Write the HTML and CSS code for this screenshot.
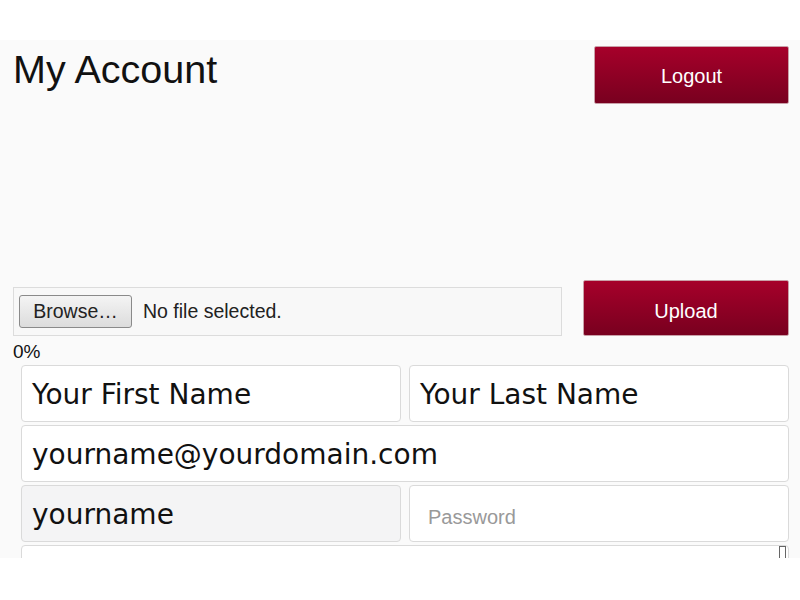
FILE: index.html
```html
<!DOCTYPE html>
<html>
<head>
<meta charset="utf-8">
<link rel="stylesheet" href="styles.css">
</head>
<body>
<div class="topband"></div>
<div class="page">
  <div class="header">
    <h1 class="title">My Account</h1>
    <button class="btn btn-logout">Logout</button>
  </div>
  <div class="upload-row">
    <div class="filebox">
      <span class="browse">Browse&hellip;</span>
      <span class="nofile">No file selected.</span>
    </div>
    <button class="btn btn-upload">Upload</button>
  </div>
  <div class="progress">0%</div>
  <div class="form">
    <div class="field">Your First Name</div>
    <div class="field">Your Last Name</div>
    <div class="field wide">yourname@yourdomain.com</div>
    <div class="field readonly">yourname</div>
    <div class="field placeholder">Password</div>
    <div class="field wide last"><span class="handle"></span></div>
  </div>
</div>
</body>
</html>
```
FILE: styles.css
```css
html, body {
  margin: 0;
  padding: 0;
  background: #ffffff;
  font-family: "Liberation Sans", Arial, sans-serif;
}
.topband {
  height: 40px;
  background: #ffffff;
}
.page {
  height: 518px;
  background: #fafafa;
  overflow: hidden;
  padding: 0 11px 0 13px;
  box-sizing: border-box;
}
.header {
  display: flex;
  justify-content: space-between;
  align-items: flex-start;
  height: 240px;
}
.title {
  margin: 7px 0 0 0;
  font-weight: normal;
  font-size: 39.5px;
  line-height: 44px;
  color: #111;
}
.btn {
  border: 1px solid #c9a0a8;
  border-radius: 2px;
  background: linear-gradient(#a6002a, #78001f);
  color: #fff;
  font-family: "Liberation Sans", Arial, sans-serif;
  font-size: 20px;
  padding: 0;
  cursor: pointer;
}
.btn-logout {
  margin-top: 6px;
  width: 195px;
  height: 58px;
  padding-top: 2px;
}
.upload-row {
  display: flex;
  justify-content: space-between;
  align-items: flex-start;
}
.filebox {
  margin-top: 7px;
  width: 549px;
  height: 49px;
  box-sizing: border-box;
  border: 1px solid #dcdcdc;
  background: #f8f8f8;
  display: flex;
  align-items: center;
  padding-left: 5px;
}
.browse {
  display: inline-block;
  width: 113px;
  height: 33px;
  box-sizing: border-box;
  border: 1px solid #8a8a8a;
  border-radius: 3px;
  background: linear-gradient(#f4f4f4, #dcdcdc);
  font-size: 19.5px;
  line-height: 31px;
  text-align: center;
  color: #222;
}
.nofile {
  margin-left: 11px;
  font-size: 19.5px;
  color: #222;
}
.btn-upload {
  width: 206px;
  height: 56px;
  padding-top: 7px;
}
.progress {
  font-size: 19px;
  line-height: 22px;
  margin-top: 5px;
  color: #111;
}
.form {
  margin: 2px 0 0 8px;
  display: grid;
  grid-template-columns: 1fr 1fr;
  column-gap: 8px;
  row-gap: 3px;
}
.field {
  height: 57px;
  box-sizing: border-box;
  border: 1px solid #dadada;
  border-radius: 4px;
  background: #ffffff;
  font-family: "DejaVu Sans", sans-serif;
  font-size: 28px;
  color: #111;
  padding: 12px 10px 0 10px;
  line-height: 34px;
  position: relative;
}
.wide {
  grid-column: 1 / 3;
}
.readonly {
  background: #f4f4f5;
}
.placeholder {
  font-family: "Liberation Sans", Arial, sans-serif;
  font-size: 20px;
  color: #999;
  padding: 14px 18px 0 18px;
}
.handle {
  position: absolute;
  right: 2px;
  top: 0;
  width: 5px;
  height: 14px;
  border: 1px solid #666;
  border-bottom: none;
}
```
